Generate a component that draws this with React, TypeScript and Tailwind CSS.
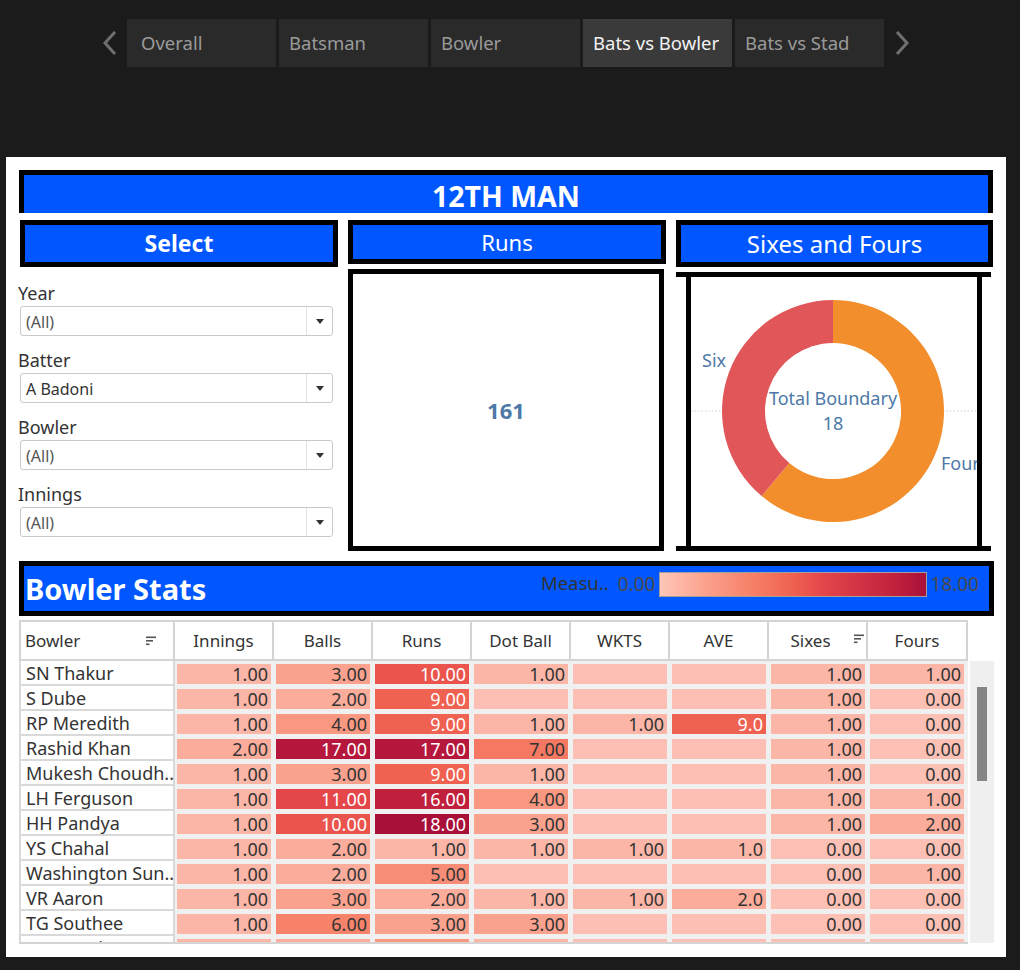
import React from "react";

const stops: [number, [number, number, number]][] = [
  [0, [253, 192, 180]],
  [3, [251, 162, 142]],
  [6, [247, 131, 107]],
  [9, [239, 97, 80]],
  [11, [228, 70, 74]],
  [16, [193, 32, 61]],
  [18, [168, 16, 58]],
];

function colorFor(v: number | null): string {
  if (v === null) return "rgb(253,191,179)";
  for (let i = 0; i < stops.length - 1; i++) {
    const [a, ca] = stops[i];
    const [b, cb] = stops[i + 1];
    if (v >= a && v <= b) {
      const t = (v - a) / (b - a);
      const c = ca.map((x, j) => Math.round(x + (cb[j] - x) * t));
      return `rgb(${c[0]},${c[1]},${c[2]})`;
    }
  }
  return "rgb(168,16,58)";
}

const names = [
  "SN Thakur",
  "S Dube",
  "RP Meredith",
  "Rashid Khan",
  "Mukesh Choudh..",
  "LH Ferguson",
  "HH Pandya",
  "YS Chahal",
  "Washington Sun..",
  "VR Aaron",
  "TG Southee",
  "T Natarajan",
];

const data: (number | null)[][] = [
  [1, 3, 10, 1, null, null, 1, 1],
  [1, 2, 9, null, null, null, 1, 0],
  [1, 4, 9, 1, 1, 9, 1, 0],
  [2, 17, 17, 7, null, null, 1, 0],
  [1, 3, 9, 1, null, null, 1, 0],
  [1, 11, 16, 4, null, null, 1, 1],
  [1, 10, 18, 3, null, null, 1, 2],
  [1, 2, 1, 1, 1, 1, 0, 0],
  [1, 2, 5, null, null, null, 0, 1],
  [1, 3, 2, 1, 1, 2, 0, 0],
  [1, 6, 3, 3, null, null, 0, 0],
  [1, 2, 4, 1, null, null, 0, 0],
];

const headers = ["Innings", "Balls", "Runs", "Dot Ball", "WKTS", "AVE", "Sixes", "Fours"];

function SortIcon() {
  return (
    <svg width="11" height="10" viewBox="0 0 11 10">
      <rect x="0" y="0.5" width="10" height="1.6" fill="#555" />
      <rect x="0" y="4" width="7" height="1.6" fill="#555" />
      <rect x="0" y="7.5" width="3.5" height="1.6" fill="#555" />
    </svg>
  );
}

function Chevron({ dir }: { dir: "left" | "right" }) {
  return (
    <svg width="16" height="24" viewBox="0 0 16 24">
      <path
        d={dir === "left" ? "M13 1 L3 12 L13 23" : "M3 1 L13 12 L3 23"}
        fill="none"
        stroke="#6f6f6f"
        strokeWidth="3"
      />
    </svg>
  );
}

function Dropdown({ value, dark }: { value: string; dark?: boolean }) {
  return (
    <div className="mt-[1px] w-[313px] h-[30px] border border-[#c9c9c9] rounded-[3px] bg-white flex">
      <div
        className={`flex-1 pl-[5px] pt-[2px] flex items-center text-[16px] ${
          dark ? "text-[#333]" : "text-[#555]"
        }`}
      >
        {value}
      </div>
      <div className="w-[26px] border-l border-[#e2e2e2] flex items-center justify-center">
        <svg width="8" height="5" viewBox="0 0 8 5">
          <path d="M0 0 L8 0 L4 5 Z" fill="#333" />
        </svg>
      </div>
    </div>
  );
}

function Filter({ label, value, dark }: { label: string; value: string; dark?: boolean }) {
  return (
    <div>
      <div className="-ml-[2px] h-[24px] leading-[24px] text-[18px] text-[#333]">{label}</div>
      <Dropdown value={value} dark={dark} />
    </div>
  );
}

const tabs = ["Overall", "Batsman", "Bowler", "Bats vs Bowler", "Bats vs Stad"];

export default function App() {
  return (
    <div className="w-[1020px] h-[970px] bg-[#1b1b1b] overflow-hidden font-['Noto_Sans',sans-serif]">
      {/* Tabs */}
      <div className="h-[157px] pt-[19px] pl-[100px] flex items-start">
        <div className="w-[27px] h-[48px] flex items-center pl-[2px]">
          <Chevron dir="left" />
        </div>
        <div className="flex gap-[3px]">
          {tabs.map((t, i) => (
            <div
              key={t}
              className={`w-[149px] h-[48px] flex items-center text-[18.5px] whitespace-nowrap ${
                i === 0 ? "pl-[14px]" : "pl-[10px]"
              } ${t === "Bats vs Bowler" ? "bg-[#3a3a3a] text-[#f2f2f2]" : "bg-[#2a2a2a] text-[#9a9a9a]"}`}
            >
              {t}
            </div>
          ))}
        </div>
        <div className="h-[48px] flex items-center pl-[10px]">
          <Chevron dir="right" />
        </div>
      </div>

      {/* White panel */}
      <div className="ml-[6px] w-[1000px] h-[800px] bg-white pl-[13px] pt-[13px]">
        {/* Title */}
        <div className="w-[974px] h-[43px] border-t-[5px] border-x-[5px] border-black bg-[#0057ff]">
          <div className="pt-[7px] text-center text-[28.5px] leading-[28px] font-bold text-white">12TH MAN</div>
        </div>

        {/* Middle row */}
        <div className="mt-[7px] ml-[1px] flex items-start gap-[10px]">
          {/* Select column */}
          <div className="w-[318px]">
            <div className="h-[47px] border-[5px] border-black bg-[#0057ff] flex items-center justify-center text-[23px] font-bold text-white leading-none">
              Select
            </div>
            <div className="pt-[14px] flex flex-col gap-[12px]">
              <Filter label="Year" value="(All)" />
              <Filter label="Batter" value="A Badoni" dark />
              <Filter label="Bowler" value="(All)" />
              <Filter label="Innings" value="(All)" />
            </div>
          </div>

          {/* Runs column */}
          <div className="w-[318px]">
            <div className="h-[44px] border-[5px] border-black bg-[#0057ff] flex items-center justify-center text-[22px] text-white leading-none">
              Runs
            </div>
            <div className="mt-[5px] w-[316px] h-[282px] border-[5px] border-black flex items-center justify-center">
              <span className="text-[22px] font-bold text-[#4e79a7] leading-none">161</span>
            </div>
          </div>

          {/* Sixes and Fours column */}
          <div className="w-[317px]">
            <div className="h-[47px] border-[5px] border-black bg-[#0057ff] flex items-center justify-center text-[24px] text-white leading-none">
              Sixes and Fours
            </div>
            <div className="mt-[5px] w-[315px] h-[279px] flex flex-col">
              <div className="h-[5px] bg-black" />
              <div className="flex-1 ml-[10px] mr-[9px] border-x-[5px] border-black relative overflow-hidden">
                <svg width="286" height="269" viewBox="0 0 286 269" className="absolute left-0 top-0">
                  <line x1="0" y1="134" x2="286" y2="134" stroke="#cfcfcf" strokeWidth="1" strokeDasharray="1.5 2" />
                  <path
                    d="M142 23 A111 111 0 1 1 70.65 219.03 L98.29 186.09 A68 68 0 1 0 142 66 Z"
                    fill="#f28e2b"
                  />
                  <path
                    d="M70.65 219.03 A111 111 0 0 1 142 23 L142 66 A68 68 0 0 0 98.29 186.09 Z"
                    fill="#e15759"
                  />
                  <circle cx="142" cy="134" r="67.5" fill="#ffffff" />
                </svg>
                <span className="absolute left-[11px] top-[71px] text-[18px] leading-[24px] text-[#4e79a7]">Six</span>
                <span className="absolute left-[250px] top-[174px] text-[18px] leading-[24px] text-[#4e79a7] whitespace-nowrap">
                  Four
                </span>
                <div className="absolute left-0 w-[284px] top-[109px] text-center text-[18px] leading-[25px] text-[#4e79a7]">
                  <div>Total Boundary</div>
                  <div>18</div>
                </div>
              </div>
              <div className="h-[5px] bg-black" />
            </div>
          </div>
        </div>

        {/* Bowler Stats header */}
        <div className="mt-[10px] w-[975px] h-[55px] border-[5px] border-black bg-[#0057ff] flex items-start justify-between">
          <div className="pl-[1px] h-[45px] flex items-center text-[29px] font-bold text-white leading-none">
            Bowler Stats
          </div>
          <div className="mt-[6px] h-[25px] flex items-center pr-[10px]">
            <span className="text-[18.5px] text-[#333] -mt-[4px]">Measu..</span>
            <span className="ml-[9px] text-[19px] text-[#4a4a4a]">0.00</span>
            <div className="ml-[4px] w-[268px] h-[25px] border border-[#a0a0a0] bg-[linear-gradient(to_right,#fec6b9,#fba28e_17%,#f7836b_33%,#ef6150_50%,#e4464a_61%,#c1203d_89%,#a8103a)]" />
            <span className="ml-[3px] text-[19px] text-[#4a4a4a]">18.00</span>
          </div>
        </div>

        {/* Table */}
        <div className="mt-[4px] w-[975px]">
          <div className="w-[949px] h-[41px] bg-[#d4d4d4] p-[2px] flex gap-[2px]">
            <div className="w-[152px] bg-white flex items-center justify-between pl-[4px] pr-[16px] text-[17px] text-[#333]">
              <span>Bowler</span>
              <SortIcon />
            </div>
            {headers.map((h, i) => (
              <div
                key={h}
                className={`${i === 7 ? "w-[98px]" : "w-[97px]"} bg-white relative flex items-center justify-center text-[17px] text-[#333] ${
                  h === "Sixes" ? "pr-[14px]" : ""
                }`}
              >
                {h}
                {h === "Sixes" && (
                  <span className="absolute right-[1px] top-[12px] flex">
                    <SortIcon />
                  </span>
                )}
              </div>
            ))}
          </div>
          <div className="flex">
            <div className="w-[949px] h-[283px] overflow-hidden border-b-2 border-[#d4d4d4] bg-[#f0f0f0]">
              {names.map((n, r) => (
                <div key={n} className="flex h-[25px]">
                  <div className="w-[156px] h-[25px] bg-white border-l-2 border-r-2 border-b-2 border-[#d9d9d9] pl-[5px] pt-[1px] text-[18px] leading-[23px] text-[#333] whitespace-nowrap overflow-hidden">
                    {n}
                  </div>
                  {data[r].map((v, c) => (
                    <div key={c} className="w-[99px] h-[25px] pl-[2px] pr-[3px] pt-[3px] pb-[2px]">
                      <div
                        className={`w-[94px] h-[20px] text-right pr-[3px] text-[18px] leading-[20px] ${
                          v !== null && v >= 8 ? "text-white" : "text-[#333]"
                        }`}
                        style={{ backgroundColor: colorFor(v) }}
                      >
                        {v === null ? "" : c === 5 ? v.toFixed(1) : v.toFixed(2)}
                      </div>
                    </div>
                  ))}
                </div>
              ))}
            </div>
            <div className="ml-[2px] w-[24px] h-[282px] bg-[#efefef] relative">
              <div className="absolute left-[7px] top-[26px] w-[10px] h-[94px] bg-[#858585]" />
            </div>
          </div>
        </div>
      </div>
    </div>
  );
}
